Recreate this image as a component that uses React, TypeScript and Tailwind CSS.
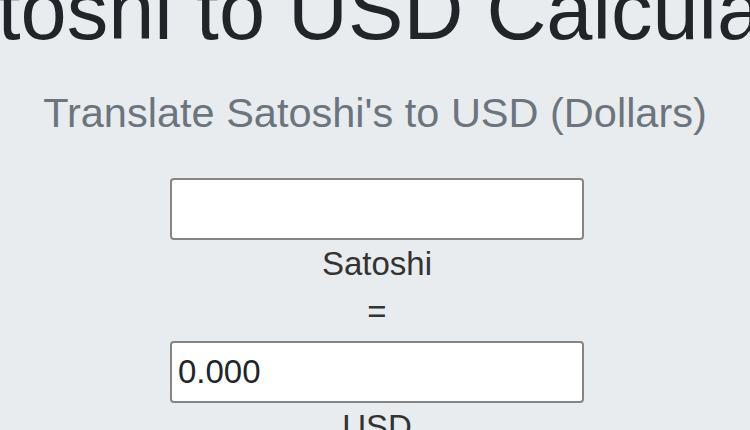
import React from 'react';

// Satoshi to USD converter page (rendered at 2x scale)
const App = () => {
  return (
    <div className="min-h-[430px] w-full overflow-hidden bg-[#e9ecef] text-[#212529] font-['Liberation_Sans',Arial,sans-serif]">
      <div className="flex flex-col items-center">
        {/* Title */}
        <h1 className="mt-[-39px] pl-[6px] whitespace-nowrap text-[83px] leading-[100px] font-normal">
          Satoshi to USD Calculator
        </h1>

        {/* Subtitle */}
        <p className="mt-[22px] whitespace-nowrap text-[41.5px] leading-[60px] text-[#6c757d]">
          Translate Satoshi's to USD (Dollars)
        </p>

        {/* Converter */}
        <div className="mt-[35px] pl-[4px] flex flex-col items-center text-[33px] leading-[48px]">
          <input
            type="text"
            className="w-[414px] h-[62px] rounded-[4px] border-2 border-[#858585] bg-white px-[6px] text-[33px] text-[#212529] outline-none"
          />
          <label className="text-[#333]">Satoshi</label>
          <div className="text-[#333]">=</div>
          <input
            type="text"
            defaultValue="0.000"
            className="mt-[5px] w-[414px] h-[62px] rounded-[4px] border-2 border-[#858585] bg-white px-[6px] text-[33px] text-[#212529] outline-none"
          />
          <label className="text-[#333]">USD</label>
        </div>
      </div>
    </div>
  );
};

export default App;
